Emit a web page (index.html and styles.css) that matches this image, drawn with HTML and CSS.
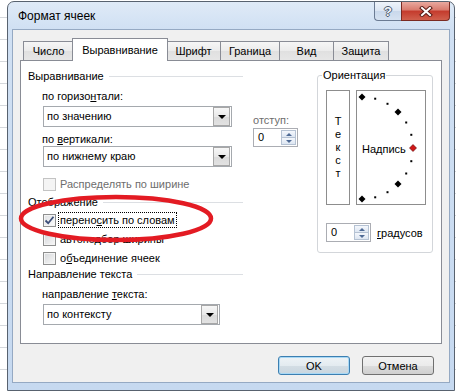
FILE: index.html
```html
<!DOCTYPE html>
<html>
<head>
<meta charset="utf-8">
<link rel="stylesheet" href="styles.css">
</head>
<body>
<div class="window">
  <div class="titlebar">
    <div class="title">Формат ячеек</div>
    <div class="caption">
      <div class="cap help"><span>?</span></div>
      <div class="cap close">
        <svg width="14" height="11" viewBox="0 0 14 11">
          <path d="M3 2 L11 9 M11 2 L3 9" stroke="#5a1c16" stroke-width="4" stroke-linecap="square"/>
          <path d="M3 2 L11 9 M11 2 L3 9" stroke="#ffffff" stroke-width="2" stroke-linecap="square"/>
        </svg>
      </div>
    </div>
  </div>
  <div class="client">
    <div class="tabs">
      <div class="tab tab-num">Число</div>
      <div class="tab tab-align active">Выравнивание</div>
      <div class="tab tab-font">Шрифт</div>
      <div class="tab tab-border">Граница</div>
      <div class="tab tab-view">Вид</div>
      <div class="tab tab-protect">Защита</div>
    </div>
    <div class="panel">
      <div class="left-col">
        <div class="group-title">Выравнивание</div>
        <div class="align-row">
          <div class="align-fields">
            <div class="label-plain">по горизо<u>н</u>тали:</div>
            <div class="combo combo-1"><span class="combo-text">по значению</span><span class="combo-btn"></span></div>
            <div class="label-plain label-vert">по <u>в</u>ертикали:</div>
            <div class="combo"><span class="combo-text">по нижнему краю</span><span class="combo-btn"></span></div>
          </div>
          <div class="indent">
            <div class="label-plain disabled">отступ:</div>
            <div class="spin"><span class="spin-val">0</span><span class="spin-btns"><span class="spin-up"></span><span class="spin-down"></span></span></div>
          </div>
        </div>
        <div class="check check-justify disabled"><span class="cb"></span><span class="txt">Распределять по ширине</span></div>
        <div class="group-title title-display">Отображение</div>
        <div class="check check-wrap"><span class="cb checked"><svg width="11" height="11" viewBox="0 0 11 11"><path d="M1.5 5.5 L4.2 8.2 L9.5 1.8" fill="none" stroke="#3b4d78" stroke-width="1.8"/></svg></span><span class="txt focus">перено<u>с</u>ить по словам</span></div>
        <div class="check check-row"><span class="cb"></span><span class="txt">автоподбор ширины</span></div>
        <div class="check check-row"><span class="cb"></span><span class="txt">о<u>б</u>ъединение ячеек</span></div>
        <div class="group-title">Направление текста</div>
        <div class="label label-dir">направление <u>т</u>екста:</div>
        <div class="combo combo-dir"><span class="combo-text">по контексту</span><span class="combo-btn"></span></div>
      </div>
      <div class="right-col">
        <fieldset class="orient">
          <legend>Ориентация</legend>
          <div class="orient-body">
            <div class="vtext"><span>Т</span><span>е</span><span>к</span><span>с</span><span>т</span></div>
            <div class="arc">
              <svg width="68" height="113" viewBox="0 0 68 113">
                <polygon points="5,2.5 8.5,6 5,9.5 1.5,6" fill="#000"/>
                <rect x="17.2" y="6.7" width="2" height="2" fill="#000"/>
                <rect x="29.5" y="11.8" width="2" height="2" fill="#000"/>
                <polygon points="41,17.5 44.5,21 41,24.5 37.5,21" fill="#000"/>
                <rect x="48.2" y="30.5" width="2" height="2" fill="#000"/>
                <rect x="53.3" y="42.8" width="2" height="2" fill="#000"/>
                <polygon points="56,53.5 59.5,57 56,60.5 52.5,57" fill="#d01818" stroke="#5a0000" stroke-width="0.6"/>
                <rect x="53.3" y="69.2" width="2" height="2" fill="#000"/>
                <rect x="48.2" y="81.5" width="2" height="2" fill="#000"/>
                <polygon points="41,89.5 44.5,93 41,96.5 37.5,93" fill="#000"/>
                <rect x="29.5" y="100.2" width="2" height="2" fill="#000"/>
                <rect x="17.2" y="105.3" width="2" height="2" fill="#000"/>
                <polygon points="5,104.5 8.5,108 5,111.5 1.5,108" fill="#000"/>
                <text x="5" y="62" class="arc-label">Надпись</text>
              </svg>
            </div>
          </div>
          <div class="degrees">
            <div class="spin"><span class="spin-val">0</span><span class="spin-btns"><span class="spin-up"></span><span class="spin-down"></span></span></div>
            <span class="deg-label"><u>г</u>радусов</span>
          </div>
        </fieldset>
      </div>
      <svg class="annot" width="200" height="56" viewBox="0 0 200 56">
        <ellipse cx="98" cy="27.5" rx="95" ry="21.5" fill="none" stroke="#e31b23" stroke-width="4.5"/>
      </svg>
    </div>
    <div class="footer">
      <button class="btn btn-default">OK</button>
      <button class="btn">Отмена</button>
    </div>
  </div>
</div>
</body>
</html>
```

FILE: styles.css
```css
* { box-sizing: border-box; }
html, body { margin: 0; padding: 0; }
body {
  width: 456px;
  height: 391px;
  overflow: hidden;
  position: relative;
  font-family: "Liberation Sans", Arial, sans-serif;
  font-size: 11px;
  color: #000;
  background-color: #fff;
  background-image: repeating-linear-gradient(to bottom, #fff 0, #fff 21px, #d5d8dc 21px, #d5d8dc 22px);
  background-position: 0 -4px;
}

/* window frame */
.window {
  position: absolute;
  left: 7px;
  top: 1px;
  width: 448px;
  height: 390px;
  border: 1px solid #58626f;
  border-radius: 7px 7px 0 0;
  background: linear-gradient(to bottom, #dfeaf7 0, #d0e0f3 27px, #c6d9f0 100%);
  padding: 0 4px 7px 4px;
  display: flex;
  flex-direction: column;
}
.titlebar {
  height: 27px;
  display: flex;
  align-items: flex-start;
}
.title {
  padding-left: 6px;
  line-height: 29px;
  font-size: 12px;
}
.caption {
  margin-left: auto;
  display: flex;
}
.cap {
  height: 19px;
  display: flex;
  align-items: center;
  justify-content: center;
  border: 1px solid #6b7b93;
  border-top: none;
}
.help {
  width: 27px;
  border-right: none;
  border-radius: 0 0 0 4px;
  background: linear-gradient(to bottom, #eef3fa, #dbe5f2 50%, #c9d8eb 51%, #d6e2f1);
  color: #f4f7fb;
  font-size: 13px;
  font-weight: bold;
  text-shadow: 1px 0 0 #4c5a6e, -1px 0 0 #4c5a6e, 0 1px 0 #4c5a6e, 0 -1px 0 #4c5a6e;
}
.close {
  width: 49px;
  border-color: #7a2a22;
  border-radius: 0 0 4px 0;
  background: linear-gradient(to bottom, #e9a99f, #d97a6d 45%, #c43a2c 50%, #d0604d 100%);
}

/* client area */
.client {
  height: 354px;
  border: 1px solid #95a9c3;
  background: #f0f0f0;
  display: flex;
  flex-direction: column;
}
.tabs {
  height: 30px;
  padding: 8px 0 0 10px;
  display: flex;
  align-items: flex-end;
  position: relative;
  z-index: 1;
}
.tab {
  height: 19px;
  border: 1px solid #898c95;
  border-bottom: none;
  background: linear-gradient(to bottom, #f6f6f6, #ebebeb 50%, #e0e0e0 51%, #e6e6e6);
  text-align: center;
  line-height: 18px;
  white-space: nowrap;
}
.tab + .tab { margin-left: -1px; }
.tab-num { width: 51px; }
.tab-align.active {
  width: 96px;
  height: 23px;
  margin: 0 -1px -1px -2px;
  padding-top: 2px;
  background: #fff;
  position: relative;
  z-index: 2;
}
.tab-font { width: 55px; }
.tab-border { width: 60px; }
.tab-view { width: 55px; }
.tab-protect { width: 56px; }

.panel {
  height: 284px;
  margin: 0 7px 0 7px;
  border: 1px solid #898c95;
  background: #fff;
  position: relative;
  display: flex;
  align-items: flex-start;
}

/* left column */
.left-col {
  flex: none;
  margin-left: 7px;
  width: 215px;
  padding-top: 7px;
  display: flex;
  flex-direction: column;
  align-items: stretch;
}
.group-title {
  height: 16px;
  display: flex;
  align-items: center;
  gap: 5px;
  white-space: nowrap;
}
.group-title::after {
  content: "";
  flex: 1;
  height: 1px;
  background: #dcdfe3;
}
.title-display { margin-top: 2px; }
.label {
  height: 14px;
  line-height: 14px;
  padding-left: 14px;
  white-space: nowrap;
}
.label-plain {
  height: 14px;
  line-height: 14px;
  white-space: nowrap;
}
.disabled, .disabled .txt { color: #6d6d6d; }
.align-row {
  margin-top: 5px;
  display: flex;
  width: 280px;
}
.align-fields {
  flex: none;
  width: 204px;
  padding-left: 14px;
  display: flex;
  flex-direction: column;
}
.combo {
  flex: none;
  height: 21px;
  width: 189px;
  margin-left: 15px;
  border: 1px solid #a5a9ae;
  background: #fff;
  display: flex;
  align-items: center;
  padding: 0 1px 0 3px;
}
.align-fields .combo { margin-left: 1px; }
.combo-1 { margin-top: 3px; }
.label-vert { margin-top: 5px; }
.combo-text {
  flex: 1;
  line-height: 17px;
  white-space: nowrap;
}
.combo-btn {
  flex: none;
  width: 17px;
  height: 19px;
  border: 1px solid #a7a7a7;
  background: linear-gradient(to bottom, #f7f7f7, #e8e8e8 50%, #dadada 51%, #e2e2e2);
  display: flex;
  align-items: center;
  justify-content: center;
}
.combo-btn::before {
  content: "";
  border-left: 4px solid transparent;
  border-right: 4px solid transparent;
  border-top: 4px solid #000;
}
.combo-dir {
  width: 177px;
  margin-top: 3px;
}
.label-dir { margin-top: 5px; }

.indent {
  flex: none;
  margin-left: 21px;
  padding-top: 24px;
  display: flex;
  flex-direction: column;
}
.spin {
  flex: none;
  width: 45px;
  height: 19px;
  margin-top: 1px;
  border: 1px solid #abadb3;
  background: #fff;
  display: flex;
  align-items: stretch;
  padding: 1px;
}
.spin-val {
  flex: 1;
  padding-left: 3px;
  line-height: 15px;
}
.spin-btns {
  flex: none;
  width: 15px;
  display: flex;
  flex-direction: column;
}
.spin-up, .spin-down {
  flex: 1;
  border: 1px solid #b5c2d3;
  background: linear-gradient(to bottom, #f4f7fc, #dde6f2);
  display: flex;
  align-items: center;
  justify-content: center;
}
.spin-down { border-top: none; }
.spin-up::before {
  content: "";
  border-left: 3px solid transparent;
  border-right: 3px solid transparent;
  border-bottom: 3px solid #4e6a95;
}
.spin-down::before {
  content: "";
  border-left: 3px solid transparent;
  border-right: 3px solid transparent;
  border-top: 3px solid #4e6a95;
}

/* check boxes */
.check {
  height: 16px;
  display: flex;
  align-items: center;
  justify-content: flex-start;
  padding-left: 15px;
  white-space: nowrap;
}
.check-justify { margin-top: 9px; }
.check-wrap { margin-top: 2px; }
.check-row { margin-top: 3px; }
.cb {
  width: 13px;
  height: 13px;
  flex: none;
  margin-right: 2px;
  border: 1px solid #8e8f8f;
  background: linear-gradient(135deg, #d5d7da, #f8f8f8);
  box-shadow: inset 0 0 0 1px #f4f4f4;
  display: flex;
  align-items: center;
  justify-content: center;
}
.cb.checked {
  background: linear-gradient(135deg, #dfe1e4, #fcfcfc);
}
.disabled .cb {
  border-color: #c3c3c3;
  background: #f4f4f4;
}
.txt {
  border: 1px solid transparent;
  padding: 0 1px;
  line-height: 14px;
}
.txt.focus { border: 1px dotted #000; }

/* right column */
.right-col {
  flex: none;
  margin-left: 74px;
  width: 116px;
}
.orient {
  margin: 6px 0 0 0;
  padding: 7px 6px 10px 8px;
  border: 1px solid #d3d6da;
  border-radius: 3px;
  min-width: 0;
}
.orient legend {
  padding: 0 1px;
  margin-left: -4px;
  line-height: 16px;
}
.orient-body {
  display: flex;
  gap: 6px;
}
.vtext {
  width: 24px;
  height: 115px;
  border: 1px solid #8d8d8d;
  display: flex;
  flex-direction: column;
  align-items: center;
  justify-content: center;
  line-height: 13px;
}
.arc {
  width: 70px;
  height: 115px;
  border: 1px solid #8d8d8d;
}
.arc svg { display: block; }
.arc-label {
  font-family: "Liberation Sans", Arial, sans-serif;
  font-size: 11px;
  fill: #000;
}
.degrees {
  margin-top: 18px;
  display: flex;
  align-items: center;
  gap: 6px;
}
.degrees .spin { margin-top: 0; }

/* annotation */
.annot {
  position: absolute;
  left: -3px;
  top: 130px;
  pointer-events: none;
}

/* footer */
.footer {
  display: flex;
  justify-content: flex-end;
  padding: 12px 15px 0 0;
}
.btn {
  width: 72px;
  height: 19px;
  margin-left: 12px;
  padding: 0;
  border: 1px solid #707070;
  border-radius: 3px;
  background: linear-gradient(to bottom, #f2f2f2, #ebebeb 50%, #dddddd 51%, #cfcfcf);
  font: inherit;
  color: #000;
}
.btn-default {
  border-color: #3c7fb1;
  box-shadow: inset 0 0 0 1px #a8d8f5;
  background: linear-gradient(to bottom, #eef3f6, #e3ebf0 50%, #d3dde4 51%, #c9d6df);
}
```
